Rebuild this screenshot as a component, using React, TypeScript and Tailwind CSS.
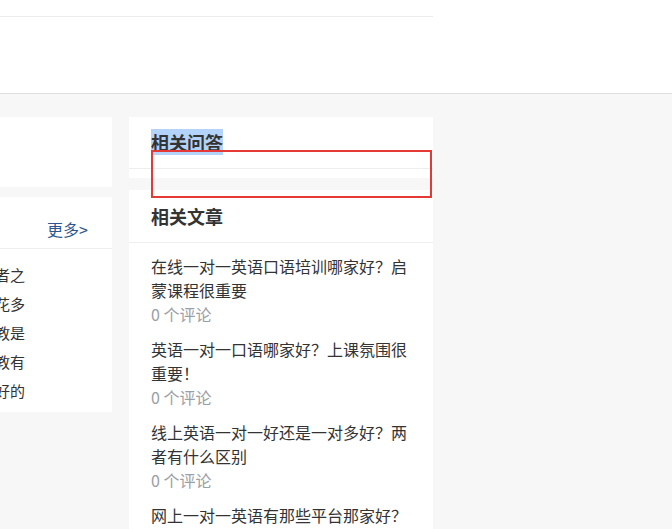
const articles = [
  { title: '在线一对一英语口语培训哪家好？启蒙课程很重要', comments: 0 },
  { title: '英语一对一口语哪家好？上课氛围很重要！', comments: 0 },
  { title: '线上英语一对一好还是一对多好？两者有什么区别', comments: 0 },
  { title: '网上一对一英语有那些平台那家好？', comments: 0 },
]

const leftLines = [
  '对于很多英语初学者之',
  '来说，选择机构要花多',
  '少钱，外教和中教是',
  '否都需要，线上外教有',
  '哪些平台是比较好的',
]

export default function App() {
  return (
    <div
      className="min-h-[529px] bg-[#f7f7f7] overflow-hidden text-[#333]"
      style={{ fontFamily: '"Microsoft YaHei", "Noto Sans CJK SC", "Noto Sans", sans-serif' }}
    >
      <header className="h-[94px] bg-white border-b border-[#dedede]">
        <div className="ml-[-188px] w-[621px] h-[17px] border-b border-[#ececec]" />
      </header>

      <main className="ml-[-188px] mt-[23px] flex gap-[17px] items-start">
        <div className="w-[300px] flex flex-col gap-[10px]">
          <div className="h-[70px] bg-white" />
          <div className="bg-white pb-[7px]">
            <div className="h-[52px] border-b border-[#eeeeee] flex justify-end pr-[24px] pt-[23px]">
              <a className="text-[16px] leading-[18px] text-[#2d5590]">更多&gt;</a>
            </div>
            <div className="pt-[11px] pr-[87px]">
              {leftLines.map((line) => (
                <div key={line} className="text-right whitespace-nowrap text-[15px] leading-[29px] text-[#333]">
                  {line}
                </div>
              ))}
            </div>
          </div>
        </div>

        <div className="relative w-[304px] flex flex-col gap-[12px]">
          <div className="bg-white h-[61px]">
            <div className="h-[52px] border-b border-[#eeeeee] flex items-center px-[22px]">
              <h3 className="text-[18px] leading-[23px] font-bold text-[#333]">
                <span className="bg-[#b3d3fa]">相关问答</span>
              </h3>
            </div>
          </div>

          <div className="bg-white">
            <div className="h-[53px] border-b border-[#eeeeee] flex items-center px-[22px]">
              <h3 className="text-[18px] leading-[23px] font-bold text-[#333]">相关文章</h3>
            </div>
            <ul className="px-[22px] pt-[11px]">
              {articles.map((a) => (
                <li key={a.title} className="mb-[11px]">
                  <a className="block text-[16px] leading-[24px] text-[#333]">{a.title}</a>
                  <span className="block text-[16px] leading-[24px] text-[#9a9ea6]">{a.comments} 个评论</span>
                </li>
              ))}
            </ul>
          </div>

          <div className="absolute left-[22px] top-[33px] w-[281px] h-[48px] border-2 border-[#e53935] z-10" />
        </div>
      </main>
    </div>
  )
}
